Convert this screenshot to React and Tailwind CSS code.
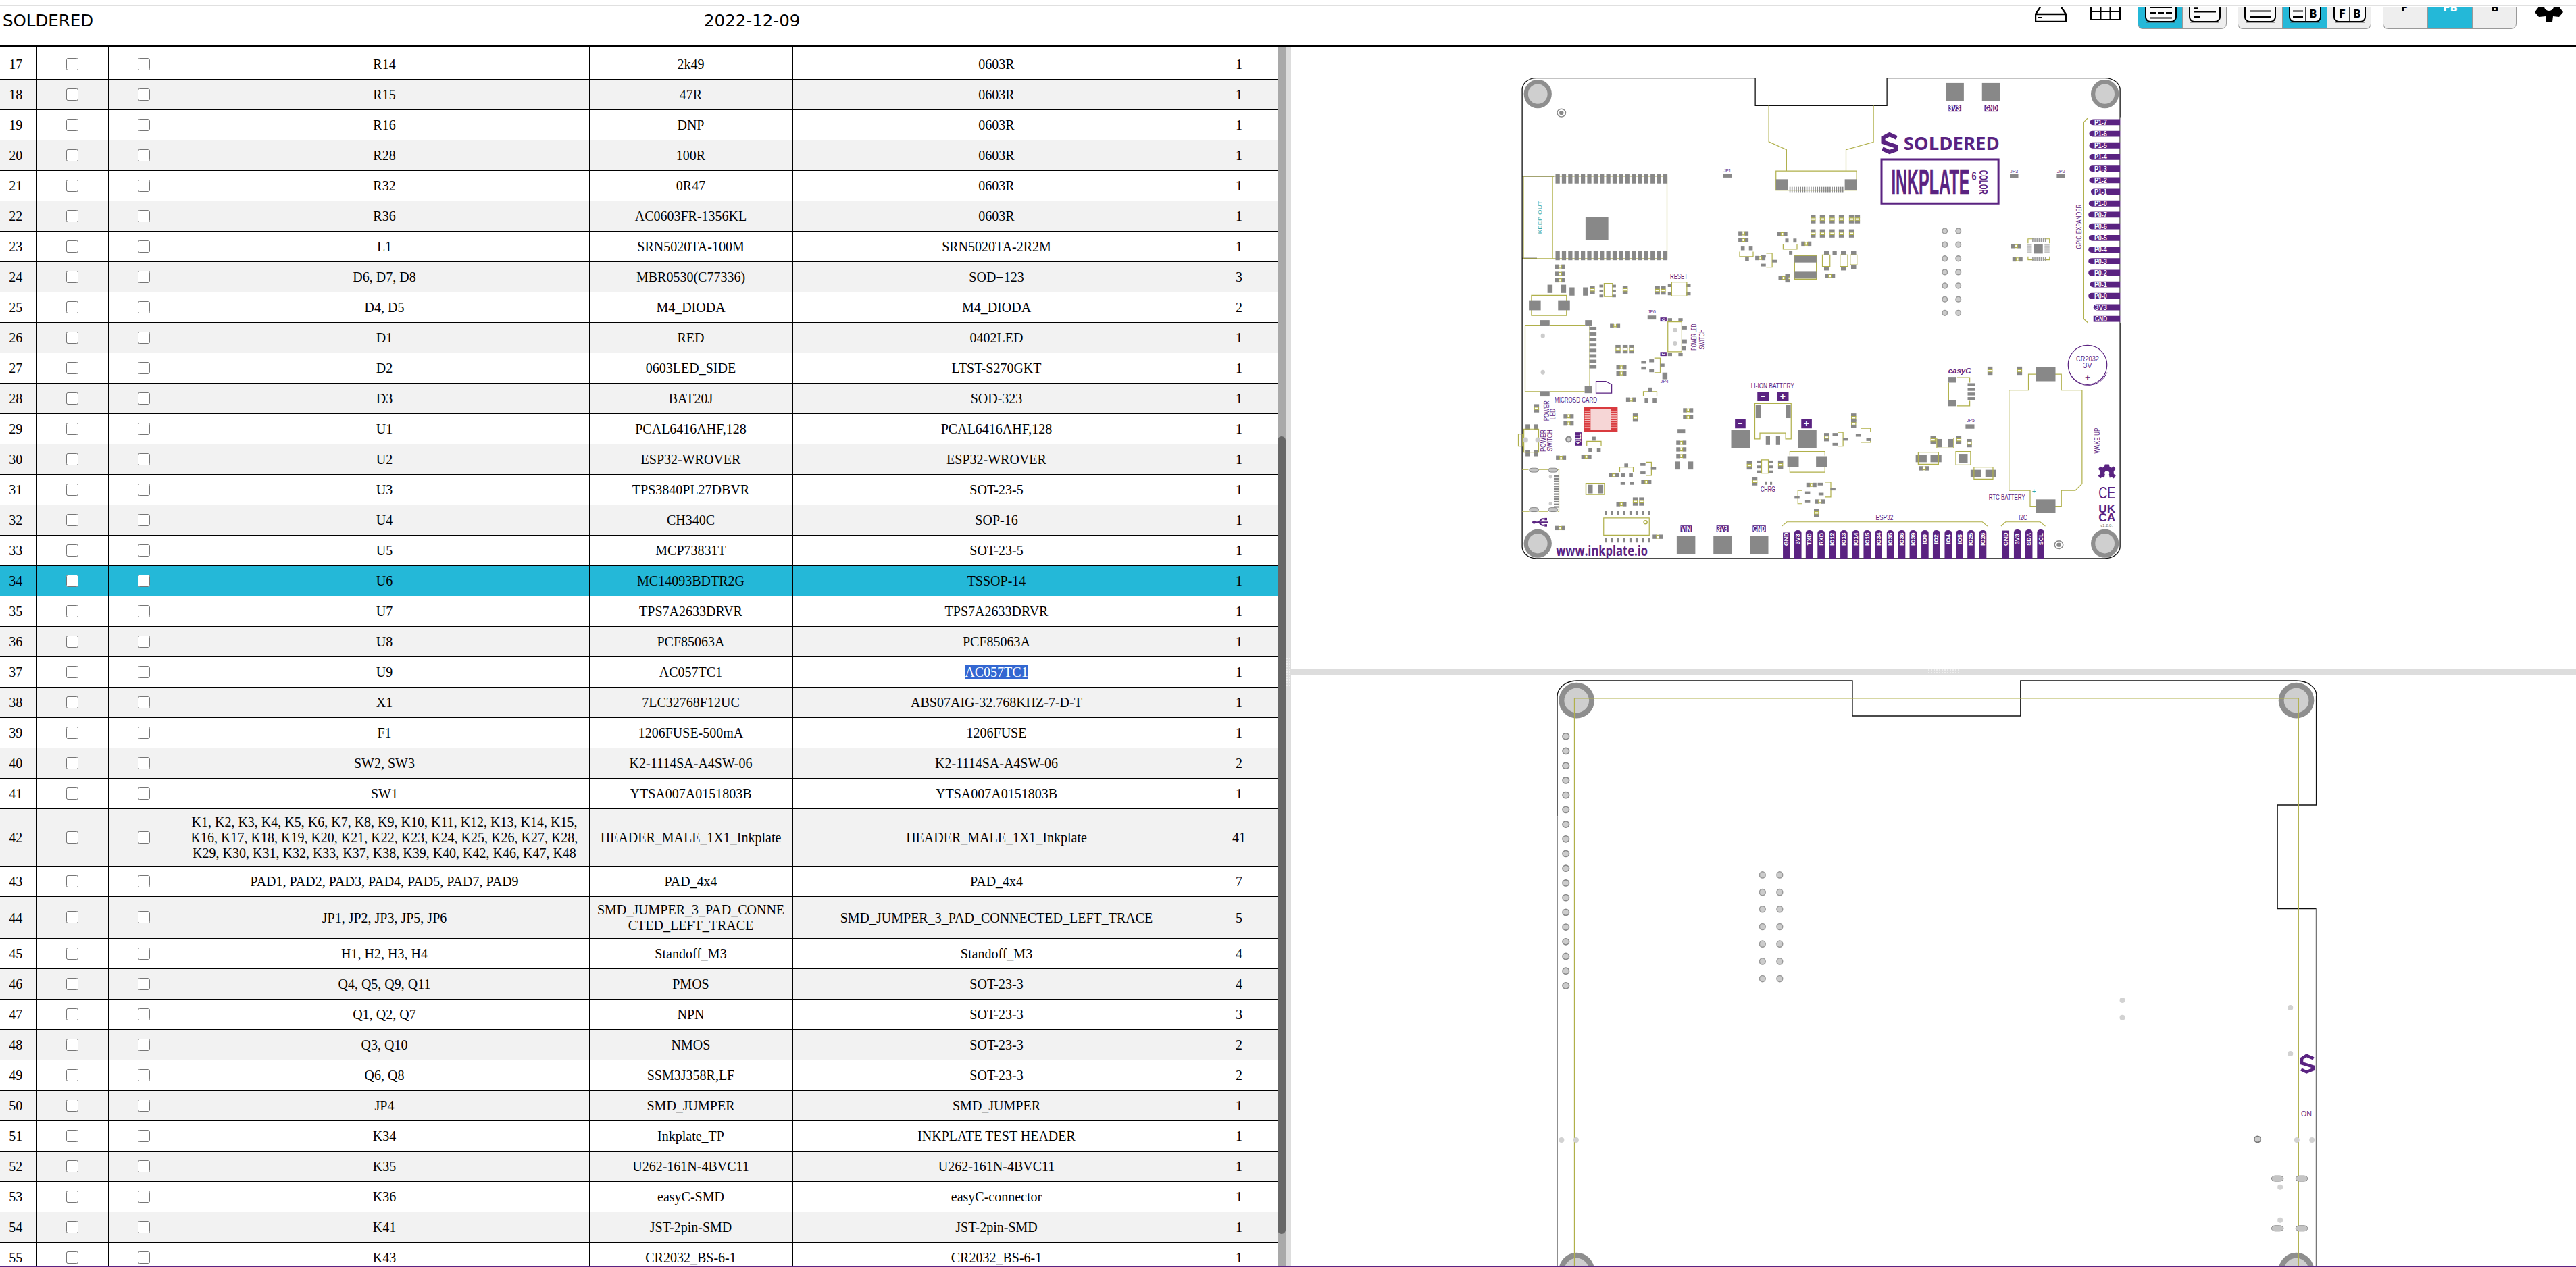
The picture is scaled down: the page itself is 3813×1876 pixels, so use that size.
import React from 'react';

const P = '#5a2381', PAD = '#888888', SILK = '#b0b04a', SANS = '"Liberation Sans", Arial, sans-serif';
const SX = 0.625, SY = 0.4912;

const rows = [
  [17,'R14','2k49','0603R',1],[18,'R15','47R','0603R',1],[19,'R16','DNP','0603R',1],[20,'R28','100R','0603R',1],[21,'R32','0R47','0603R',1],
  [22,'R36','AC0603FR-1356KL','0603R',1],[23,'L1','SRN5020TA-100M','SRN5020TA-2R2M',1],[24,'D6, D7, D8','MBR0530(C77336)','SOD−123',3],[25,'D4, D5','M4_DIODA','M4_DIODA',2],
  [26,'D1','RED','0402LED',1],[27,'D2','0603LED_SIDE','LTST-S270GKT',1],[28,'D3','BAT20J','SOD-323',1],[29,'U1','PCAL6416AHF,128','PCAL6416AHF,128',1],[30,'U2','ESP32-WROVER','ESP32-WROVER',1],
  [31,'U3','TPS3840PL27DBVR','SOT-23-5',1],[32,'U4','CH340C','SOP-16',1],[33,'U5','MCP73831T','SOT-23-5',1],[34,'U6','MC14093BDTR2G','TSSOP-14',1],[35,'U7','TPS7A2633DRVR','TPS7A2633DRVR',1],
  [36,'U8','PCF85063A','PCF85063A',1],[37,'U9','AC057TC1','AC057TC1',1],[38,'X1','7LC32768F12UC','ABS07AIG-32.768KHZ-7-D-T',1],[39,'F1','1206FUSE-500mA','1206FUSE',1],
  [40,'SW2, SW3','K2-1114SA-A4SW-06','K2-1114SA-A4SW-06',2],[41,'SW1','YTSA007A0151803B','YTSA007A0151803B',1],
  [42,'K1, K2, K3, K4, K5, K6, K7, K8, K9, K10, K11, K12, K13, K14, K15, K16, K17, K18, K19, K20, K21, K22, K23, K24, K25, K26, K27, K28, K29, K30, K31, K32, K33, K37, K38, K39, K40, K42, K46, K47, K48','HEADER_MALE_1X1_Inkplate','HEADER_MALE_1X1_Inkplate',41],
  [43,'PAD1, PAD2, PAD3, PAD4, PAD5, PAD7, PAD9','PAD_4x4','PAD_4x4',7],[44,'JP1, JP2, JP3, JP5, JP6','SMD_JUMPER_3_PAD_CONNECTED_LEFT_TRACE','SMD_JUMPER_3_PAD_CONNECTED_LEFT_TRACE',5],
  [45,'H1, H2, H3, H4','Standoff_M3','Standoff_M3',4],[46,'Q4, Q5, Q9, Q11','PMOS','SOT-23-3',4],[47,'Q1, Q2, Q7','NPN','SOT-23-3',3],[48,'Q3, Q10','NMOS','SOT-23-3',2],[49,'Q6, Q8','SSM3J358R,LF','SOT-23-3',2],
  [50,'JP4','SMD_JUMPER','SMD_JUMPER',1],[51,'K34','Inkplate_TP','INKPLATE TEST HEADER',1],[52,'K35','U262-161N-4BVC11','U262-161N-4BVC11',1],[53,'K36','easyC-SMD','easyC-connector',1],[54,'K41','JST-2pin-SMD','JST-2pin-SMD',1],[55,'K43','CR2032_BS-6-1','CR2032_BS-6-1',1],
];

/* ---------- toolbar drawings ---------- */
const Frame = ({ x = 11, w = 45, children }) => (
  <svg width="66" height="33" viewBox="0 0 66 33" className="block">
    <rect x={x} y="-20" width={w} height="42" rx="7" fill="#fafafa" stroke="#000" strokeWidth="2" />
    <path d={`M${x + 1} 23 h${w - 2}`} stroke="#555" strokeWidth="1" />
    {children}
  </svg>
);
const Ln = ({ d, w = 2 }) => <path d={d} stroke="#000" strokeWidth={w} fill="none" />;
const Bt = ({ x, t, c = '#000', s = 15 }) => (
  <text x={x} y={16} textAnchor="middle" fontSize={s} fontWeight="700" fill={c} fontFamily='"DejaVu Sans", sans-serif'>{t}</text>
);
const Btn = ({ on, first, last, children }) => (
  <div className={`w-[66px] h-[33px] overflow-hidden border-b border-l border-[#999] ${on ? 'bg-[#24b8d8]' : 'bg-[#eeeeee]'} ${first ? 'rounded-bl-[8px]' : ''} ${last ? 'border-r rounded-br-[8px]' : ''}`}>
    {children}
  </div>
);

/* ---------- board drawing helpers ---------- */
const R = ({ x, y, w, h, f = PAD, rx }) => <rect x={x} y={y} width={w} height={h} fill={f} rx={rx} />;
const S = ({ d, c = SILK, w = 1.2 }) => <path d={d} fill="none" stroke={c} strokeWidth={w} vectorEffect="non-scaling-stroke" />;
const Box = ({ x, y, w, h, c = SILK, sw = 1.2 }) => <rect x={x} y={y} width={w} height={h} fill="none" stroke={c} strokeWidth={sw} vectorEffect="non-scaling-stroke" />;
const Cv = ({ x, y, h = 25 }) => (<g><R x={x} y={y} w={12} h={h * 0.36} /><R x={x} y={y + h * 0.64} w={12} h={h * 0.36} /><Box x={x + 1} y={y + h * 0.36} w={10} h={h * 0.28} /></g>);
const Ch = ({ x, y }) => (<g><R x={x} y={y} w={9} h={13} /><R x={x + 15} y={y} w={9} h={13} /><Box x={x + 9} y={y + 2} w={6} h={9} /></g>);
const Hole = ({ x, y, rx = 6, ry = 8, ring = '#999', f = '#cccccc', sw = 1.5 }) => <ellipse cx={x} cy={y} rx={rx} ry={ry} fill={f} stroke={ring} strokeWidth={sw} vectorEffect="non-scaling-stroke" />;
const Mount = ({ x, y, rx = 33, ry = 43, irx = 23, iry = 30 }) => (<g><ellipse cx={x} cy={y} rx={rx} ry={ry} fill="#8e8e8e" /><ellipse cx={x} cy={y} rx={irx} ry={iry} fill="#cfcfcf" /></g>);
const T = ({ x, y, t, s = 8, c = P, r = 0, b, len, a = 'middle', f = SANS, i, st }) => {
  const px = x * SX, py = y * SY;
  return (
    <text x={px} y={py} transform={r ? `rotate(${r} ${px} ${py})` : undefined} fontSize={s} fill={c} stroke={st ? c : undefined} strokeWidth={st} fontWeight={b ? 700 : 400} fontStyle={i ? 'italic' : 'normal'} fontFamily={f} textAnchor={a} dominantBaseline="central" textLength={len} lengthAdjust={len ? 'spacingAndGlyphs' : undefined}>{t}</text>
  );
};

const gpio = [['P1-7',185,1430],['P1-6',220,1428],['P1-5',255,1428],['P1-4',290,1428],['P1-3',325,1428],['P1-2',360,1428],['P1-1',395,1432],['P1-0',430,1427],['P0-7',464,1426],['P0-6',499,1427],['P0-5',534,1427],['P0-4',569,1426],['P0-3',604,1426],['P0-2',639,1426],['P0-1',674,1430],['P0-0',709,1426],['3V3',743,1438],['GND',778,1438]];
const esp = ['GND','3V3','TXD','RXD','IO12','IO13','IO14','IO15','IO34','IO35','IO36','IO39','IO0','IO2','IO4','IO5','IO25','IO26'];
const espX = [711,738,765,793,820,847,875,902,929,957,984,1011,1039,1066,1094,1121,1148,1176];
const i2c = [['GND',1230],['3V3',1258],['SDA',1285],['SCL',1313]];
const cvs = [[768,465],[790,465],[813,465],[835,465],[859,465],[873,465],[768,508],[790,508],[813,508],[835,508],[859,508],[245,678],[323,678],[399,680],[413,680],[113,1035],[617,1207],[691,1205],[630,1255],[776,1350],[1187,922],[1257,922],[1052,1130],[1113,1130],[1138,1140],[800,1122],[864,1063],[864,1082],[347,1063],[347,1316],[362,1316],[708,643],[306,857],[323,857],[338,857]];
const chs = [[163,614],[163,636],[163,655],[597,514],[597,534],[689,516],[746,545],[293,791],[308,918],[308,936],[331,1015],[466,1047],[466,1068],[183,1065],[183,1087],[225,1187],[165,1190],[290,1243],[367,1263],[308,1330],[394,1428],[163,1402],[450,1145],[450,1165],[450,1185],[758,1272],[778,1322],[1025,1222],[1243,552],[1246,592],[637,588],[692,648],[802,642]];
const pads = [
  [603,558,9,13],[622,558,9,13],[613,590,9,13],[650,585,12,8],[650,612,12,8],[677,600,11,8],[708,536,8,12],[727,536,8,12],[717,572,8,12],
  [800,574,12,12],[820,574,10,12],[800,620,12,12],[840,574,12,12],[840,620,12,12],[864,573,12,12],[864,616,12,12],
  [145,675,12,25],[177,675,12,25],[197,683,12,25],[229,683,12,25],[268,675,9,8],[268,690,9,8],[268,705,9,8],[298,675,9,8],[298,690,9,8],[298,705,9,8],
  [101,722,28,30],[170,722,28,30],[430,672,10,10],[430,697,10,10],[474,672,10,10],[474,697,10,10],
  [430,776,10,10],[455,776,10,10],[430,880,10,10],[455,880,10,10],[463,798,12,12],[463,840,12,12],[463,860,10,12],
  [367,904,11,9],[367,922,11,9],[386,900,11,9],[386,930,11,9],[412,913,10,9],[417,940,12,20],
  [383,985,10,14],[375,1018,9,14],[394,1018,9,14],[93,1096,10,16],[112,1096,10,16],[93,1174,10,18],[112,1174,10,18],
  [250,1133,9,12],[242,1167,9,12],[262,1167,9,12],[327,1214,9,12],[320,1244,9,12],[338,1244,9,12],[318,1270,10,8],[340,1270,10,8],[365,1213,12,8],[365,1238,12,8],[390,1225,12,8],
  [240,1278,12,26],[265,1278,12,26],[447,1208,12,24],[478,1208,12,24],[453,1110,18,12],
  [640,1205,11,8],[640,1220,11,8],[640,1235,11,8],[668,1205,11,8],[668,1220,11,8],[668,1235,11,8],[713,1192,27,32],[781,1192,27,32],[660,1268,5,10],[672,1268,5,10],
  [785,1272,12,8],[787,1302,12,8],[815,1287,12,8],[730,1312,12,8],[755,1298,12,8],[755,1325,12,8],[820,1122,12,8],[820,1152,12,8],[845,1137,12,8],[875,1125,12,8],[900,1138,12,8],
  [662,1130,10,28],[686,1130,10,28],[638,1037,12,40],[709,1037,12,40],
  [1094,953,18,17],[1094,1024,18,17],[1140,972,17,9],[1140,986,17,9],[1140,1000,17,9],[1140,1014,17,9],
  [1067,1140,12,25],[1094,1140,12,25],[1017,1188,26,22],[1052,1188,26,22],[1147,1233,25,22],[1182,1233,25,22],[1120,1185,20,28],
  [1296,553,22,28],[1302,924,46,42],[1302,1322,46,42],
  [127,782,23,16],[234,782,17,16],[127,996,23,16],[233,980,18,22],
];
const silk = [
  'M600 575V590H632V575','M663 580H677V622H663','M703 552V568H736V552','M107 730V707H190V730','M107 750V768H190V750','M398 896H412V940H398','M372 1012V997H404V1012',
  'M238 1162V1147H272V1162','M316 1240V1225H348V1240','M378 1210H391V1250H378','M719 1190V1178H802V1190','M719 1225V1240H802V1225','M802 1270H816V1315H802','M748 1295H738V1335H748',
  'M832 1120H845V1162H832','M888 1108H910V1118','M888 1150H910V1142','M1115 955H1145V970','M1095 970V1025','M1115 1040H1145V1025',
  'M1284 993H1238V1295H1288V1343H1362V1295H1395L1411 1275V993H1362V945H1284Z',
  'M1425 172L1415 185V778L1425 790','M700 1403L712 1390H1175L1187 1403','M1219 1403L1230 1390H1312L1324 1403',
  'M669 135V244L711 268V332','M917 135V245L852 268V332','M92 797H127M150 797H234M245 797V980M92 797V997H127M150 997H233',
  'M636 1140V1033H722V1140H709V1122H648V1140Z','M1283 550V537H1296M1322 537H1334V550M1283 590V600H1296M1322 600H1334V590',
  'M85 1232H100M124 1232H147M169 1232H172V1358H169M147 1358H124M102 1358H85',
];

const FrontBoard = () => (
  <svg width="980" height="770" viewBox="0 0 980 770" className="block shrink-0">
    <g transform={`scale(${SX} ${SY})`}>
      {[[122,100],[1465,100],[122,1455],[1465,1455]].map(([x, y], i) => <Mount key={i} x={x} y={y} />)}
      <S d="M118 52H637V135H949V52H1465A36 36 0 0 1 1501 90V1462A36 36 0 0 1 1465 1500H118A33 36 0 0 1 85 1462V90A33 36 0 0 1 118 52Z" c="#111" w="1.3" />
      <S d="M85 348H160M85 595H120" c="#111" w="1" />
      <Hole x={178} y={157} rx={10} ry={12} f="#fff" ring="#888" /><Hole x={178} y={157} rx={4} ry={5} f="#888" ring="#888" />
      <Hole x={1356} y={1459} rx={10} ry={12} f="#fff" ring="#888" /><Hole x={1356} y={1459} rx={4} ry={5} f="#888" ring="#888" />
      {silk.map((d, i) => <S key={i} d={d} />)}
      <Box x={88} y={348} w={340} h={248} /><S d="M157 348V596" />
      {Array.from({ length: 18 }, (_, i) => <g key={i}><R x={164 + i * 15} y={342} w={10} h={28} /><R x={164 + i * 15} y={574} w={10} h={27} /></g>)}
      <R x={235} y={472} w={54} h={68} />
      <Box x={686} y={332} w={191} h={58} /><R x={686} y={357} w={28} h={32} /><R x={849} y={357} w={28} h={32} />
      {Array.from({ length: 26 }, (_, i) => <R key={i} x={718 + i * 5} y={380} w={2.6} h={18} />)}
      <R x={1088} y={67} w={43} h={55} /><R x={1174} y={67} w={43} h={55} />
      <R x={561} y={340} w={20} h={12} /><R x={1240} y={342} w={20} h={12} /><R x={1351} y={342} w={20} h={12} /><R x={382} y={768} w={20} h={12} /><R x={1135} y={1096} w={21} h={13} />
      {pads.map(([x, y, w, h], i) => <R key={i} x={x} y={y} w={w} h={h} />)}
      {cvs.map(([x, y], i) => <Cv key={i} x={x} y={y} />)}
      {chs.map(([x, y], i) => <Ch key={i} x={x} y={y} />)}
      <rect x={730} y={588} width={52} height={70} fill="#fff" stroke={SILK} strokeWidth="1.5" vectorEffect="non-scaling-stroke" /><R x={730} y={588} w={52} h={20} /><R x={730} y={636} w={52} h={20} />
      <Box x={796} y={585} w={18} h={35} /><Box x={838} y={585} w={18} h={35} /><Box x={862} y={585} w={16} h={30} />
      <Box x={439} y={667} w={36} h={42} /><Box x={279} y={671} w={20} h={40} /><Box x={430} y={787} w={33} h={90} />
      <Hole x={447} y={812} rx={5} ry={7} ring="none" /><Hole x={447} y={852} rx={5} ry={7} ring="none" />
      <Hole x={134} y={829} rx={5} ry={7} ring="none" /><Hole x={134} y={939} rx={5} ry={7} ring="none" />
      {Array.from({ length: 8 }, (_, i) => <R key={i} x={244} y={802 + i * 16.5} w={17} h={10} />)}
      <Box x={89} y={1110} w={35} h={70} /><Box x={76} y={1125} w={10} h={37} />
      <Hole x={93} y={1143} rx={6} ry={8} ring="none" /><Hole x={122} y={1143} rx={6} ry={8} ring="none" />
      <Hole x={195} y={1141} rx={6} ry={8} ring="#888" sw={2} />
      <Box x={236} y={1274} w={44} h={33} sw={1.5} />
      <Box x={652} y={1203} w={16} h={40} />
      <Box x={1067} y={1137} w={40} h={30} /><Box x={1023} y={1180} w={48} h={36} /><Box x={1155} y={1225} w={45} h={36} /><Box x={1112} y={1178} w={35} h={40} />
      {/* red chip */}
      <R x={231} y={1044} w={80} h={75} f="#d93b3f" /><R x={247} y={1050} w={48} h={63} f="#f6d6d6" />
      {Array.from({ length: 8 }, (_, i) => <g key={i}><R x={233} y={1055 + i * 7} w={14} h={3} f="#f3b9b9" /><R x={295} y={1055 + i * 7} w={14} h={3} f="#f3b9b9" /></g>)}
      {/* usb */}
      {[[102,1228],[147,1228],[102,1347],[147,1347]].map(([x, y], i) => <rect key={i} x={x} y={y} width={22} height={12} rx={6} fill="#c4c4c4" stroke="#888" strokeWidth="1" vectorEffect="non-scaling-stroke" />)}
      {Array.from({ length: 13 }, (_, i) => <R key={i} x={160} y={1250 + i * 7.7} w={12} h={4.5} />)}
      <Hole x={152} y={1254} rx={4} ry={5} ring="none" /><Hole x={152} y={1335} rx={4} ry={5} ring="none" />
      {/* soic */}
      <Box x={278} y={1378} w={108} h={52} /><Hole x={377} y={1391} rx={4} ry={5} f="#fff" ring={SILK} />
      {Array.from({ length: 8 }, (_, i) => <g key={i}><R x={281 + i * 14.5} y={1356} w={5} h={14} /><R x={281 + i * 14.5} y={1438} w={5} h={14} /></g>)}
      {/* big pads */}
      {[[451,1432],[538,1432],[624,1432],[580,1113],[738,1113]].map(([x, y], i) => <R key={i} x={x} y={y} w={44} h={55} />)}
      {/* sd icon */}
      <S d="M260 1002V966H283L297 976V1002Z" c={P} />
      {/* gpio holes */}
      {[513,554,596,637,678,719,760].map((y) => <g key={y}><Hole x={1086} y={y} /><Hole x={1118} y={y} /></g>)}
      {/* qfn */}
      {Array.from({ length: 7 }, (_, i) => <g key={i}><R x={1293 + i * 5} y={534} w={2.5} h={12} f="#999" /><R x={1293 + i * 5} y={591} w={2.5} h={12} f="#999" /><R x={1280} y={553 + i * 4} w={12} h={2} f="#999" /><R x={1322} y={553 + i * 4} w={12} h={2} f="#999" /></g>)}
      {/* purple plates */}
      {gpio.map(([, y, x], i) => <rect key={i} x={x} y={y - 9} width={1501 - x + 8} height={18} rx={i === 17 ? 0 : 8} fill={P} />)}
      <R x={1501.5} y={170} w={10} h={620} f="#fff" />
      {espX.map((x, i) => <rect key={i} x={x - 8.5} y={i === 0 ? 1422 : 1415} width={17} height={i === 0 ? 78 : 93} rx={i === 0 ? 0 : 8} fill={P} />)}
      {i2c.map(([, x], i) => <rect key={i} x={x - 8.5} y={i === 0 ? 1416 : 1413} width={17} height={i === 0 ? 84 : 95} rx={i === 0 ? 0 : 8} fill={P} />)}
      <R x={690} y={1500.5} w={650} h={20} f="#fff" />
      {[[1095,133,30,20],[1180,133,32,20],[460,1401,27,20],[545,1401,29,20],[631,1401,31,20],[412,774,15,12],[412,878,15,12],[211,1120,16,40],[642,998,27,28],[689,998,27,28],[589,1080,25,28],[746,1080,25,28]].map(([x, y, w, h], i) => <R key={i} x={x} y={y} w={w} h={h} f={P} />)}
      <Box x={936} y={297} w={277} h={133} c={P} sw={3} />
      <S d="M972 232L955 222L940 232V245L970 258V268L955 275L938 265" c={P} w={6} />
      <ellipse cx={1424} cy={917} rx={46} ry={59} fill="none" stroke={P} strokeWidth="1.2" vectorEffect="non-scaling-stroke" />
      <S d="M1385 950A48 61 0 0 0 1470 940" c={P} w={1} />
      {/* usb glyph */}
      <S d="M110 1391H146M124 1391L132 1381H138M124 1391L132 1400H138" c={P} w={2} />
      <ellipse cx={113} cy={1391} rx={4} ry={5} fill={P} /><R x={138} y={1378} w={6} h={7} f={P} /><R x={138} y={1397} w={6} h={7} f={P} />
      {/* gear */}
      <g transform="translate(1470 1241) scale(1.6 2.036)">
        <path d="M-3 -12H3L4 -8L7 -7L10 -9L13 -5L10 -2V2L13 5L10 9L7 7L4 8L3 3A3.5 3.5 0 1 0 -3 3L-4 8L-7 7L-10 9L-13 5L-10 2V-2L-13 -5L-10 -9L-7 -7L-4 -8Z" fill={P} />
      </g>
    </g>

    {/* text, in real pixels */}
    <T x={127} y={472} t="KEEP OUT" s={8} c="#35a9a9" r={-90} len={49} />
    <T x={1109} y={143} t="3V3" s={10.5} c="#fff" b len={17} /><T x={1196} y={143} t="GND" s={10.5} c="#fff" b len={18} />
    <T x={473} y={1411} t="VIN" s={10.5} c="#fff" b len={15} /><T x={559} y={1411} t="3V3" s={10.5} c="#fff" b len={16} /><T x={646} y={1411} t="GND" s={10.5} c="#fff" b len={18} />
    <T x={1102} y={248} t="SOLDERED" s={27} b len={142} f='"Open Sans", sans-serif' />
    <T x={1052} y={365} t="INKPLATE" s={51} b len={116} st={0.5} />
    <T x={1155} y={347} t="6" s={19} b len={7} />
    <T x={1177} y={366} t="COLOR" s={16} b r={90} len={36} />
    <T x={571} y={330} t="JP1" s={7.5} len={11} /><T x={1250} y={332} t="JP3" s={7.5} len={12} /><T x={1361} y={332} t="JP2" s={7.5} len={12} />
    <T x={392} y={757} t="JP6" s={7.5} len={12} /><T x={422} y={965} t="JP4" s={7.5} len={12} /><T x={1147} y={1085} t="JP5" s={7.5} len={12} />
    {gpio.map(([t, y], i) => <T key={i} x={t.length > 3 ? 1455 : 1456} y={y} t={t} s={10.5} c="#fff" b len={t.length > 3 ? 19 : 18} />)}
    <T x={1404} y={500} t="GPIO EXPANDER" s={10} r={-90} len={66} />
    <T x={456} y={650} t="RESET" s={11} len={26} />
    <T x={492} y={833} t="POWER LED" s={10} r={-90} len={39} /><T x={512} y={840} t="SWITCH" s={10} r={-90} len={30} />
    <T x={420} y={780} t="0" s={7} c="#fff" b r={90} /><T x={420} y={884} t="1" s={7} c="#fff" b r={90} />
    <T x={212} y={1023} t="MICROSD CARD" s={11} len={63} />
    <T x={143} y={1055} t="POWER" s={10} r={-90} len={30} /><T x={158} y={1065} t="LED" s={10} r={-90} len={16} />
    <T x={135} y={1145} t="POWER" s={10} r={-90} len={33} /><T x={151} y={1145} t="SWITCH" s={10} r={-90} len={32} />
    <T x={219} y={1140} t="KILL" s={10} c="#fff" b r={-90} len={17} />
    <T x={678} y={980} t="LI-ION BATTERY" s={11} len={64} />
    <T x={655} y={1012} t="−" s={12} c="#fff" b /><T x={702} y={1012} t="+" s={14} c="#fff" b />
    <T x={601} y={1094} t="−" s={12} c="#fff" b /><T x={758} y={1094} t="+" s={14} c="#fff" b />
    <T x={667} y={1290} t="CHRG" s={11} len={22} />
    <T x={1121} y={935} t="easyC" s={11} b i len={34} />
    <T x={1233} y={1316} t="RTC BATTERY" s={11} len={54} />
    <T x={1297} y={1298} t="+" s={10} c="#35a9a9" />
    <T x={1424} y={897} t="CR2032" s={10.5} len={34} /><T x={1424} y={918} t="3V" s={10.5} /><T x={1424} y={954} t="+" s={14} b />
    <T x={1448} y={1145} t="WAKE UP" s={10} r={-90} len={38} />
    <T x={1470} y={1302} t="CE" s={24} len={25} />
    <T x={1470} y={1351} t="UK" s={16} b len={25} /><T x={1470} y={1377} t="CA" s={16} b len={25} />
    <T x={1469} y={1400} t="v1.2.0." s={6} c="#777" />
    <T x={943} y={1377} t="ESP32" s={11} len={26} /><T x={1271} y={1377} t="I2C" s={11} len={13} />
    <T x={165} y={1475} t="www.inkplate.io" s={21} a="start" b len={136} f='"Open Sans", sans-serif' />
    {esp.map((t, i) => <T key={i} x={espX[i]} y={1442} t={t} s={9} c="#fff" b r={-90} />)}
    {i2c.map(([t, x], i) => <T key={i} x={x} y={1442} t={t} s={9} c="#fff" b r={-90} />)}
  </svg>
);

const BackBoard = () => (
  <svg width="1250" height="876" viewBox="0 19 1250 876" className="block shrink-0">
    <g transform="scale(0.7974 0.5714)">
      {[[105,100],[1441,100],[105,1577],[1441,1577]].map(([x, y], i) => <Mount key={i} x={x} y={y} rx={33} ry={46} irx={23} iry={32} />)}
      <S d="M105 49H617V140H929V49H1441A37 37 0 0 1 1478 90V371H1406V640H1478M69 400V90A36 41 0 0 1 105 49" c="#111" w="1.3" />
      <S d="M1478 640V1600M69 400V1600" c="#777" w="1.6" />
      <S d="M101 1600V94H1445V1600" w="1.4" />
      {Array.from({ length: 18 }, (_, i) => <Hole key={i} x={85} y={193 + i * 38} rx={6} ry={8} ring="#888" sw={1.6} />)}
      {[552,597,641,686,731,776,821].map((y) => <g key={y}><Hole x={450} y={y} rx={5.5} ry={8} /><Hole x={482} y={y} rx={5.5} ry={8} /></g>)}
      {[[1118,877],[1118,922],[1430,896],[1430,1015],[77,1239],[104,1239],[1442,1239],[1470,1239],[1411,1361],[1411,1447]].map(([x, y], i) => <ellipse key={i} cx={x} cy={y} rx={5} ry={7} fill="#d2d2d2" />)}
      <Hole x={1369} y={1237} rx={6} ry={8} ring="#777" sw={1.6} />
      {[[1406,1339],[1451,1339],[1406,1468],[1451,1468]].map(([x, y], i) => <rect key={i} x={x - 11} y={y - 7} width={22} height={14} rx={7} fill="#c4c4c4" stroke="#888" strokeWidth="1" vectorEffect="non-scaling-stroke" />)}
      <S d="M1473 1028L1460 1020L1451 1028V1040L1472 1049V1056L1460 1063L1450 1056" c={P} w={4.5} />
    </g>
    <text x={1164} y={669} fontSize={10.5} fill={P} fontFamily={SANS} textAnchor="middle" textLength={16} lengthAdjust="spacingAndGlyphs" dominantBaseline="central">ON</text>
  </svg>
);

const BT = ({ x, t, c = '#000' }) => <text x={x} y="7" fontSize="15" fontWeight="700" fill={c} textAnchor="middle" fontFamily='"DejaVu Sans", sans-serif'>{t}</text>;

export default function App() {
  return (
    <div className="w-[3813px] h-[1876px] overflow-hidden flex flex-col bg-white border-b border-[#5a2381]">
      {/* top bar */}
      <div className="h-[70px] shrink-0 pt-[8px] border-b-[3px] border-black">
        <div className="h-px bg-[#e0e0e0]" />
        <div className="mt-px h-[50px] flex items-start overflow-hidden text-[24.5px] leading-[28px] text-black font-['DejaVu_Sans',sans-serif]">
          <div className="w-[1042px] pl-[4px] pt-[7px]">SOLDERED</div>
          <div className="pt-[7px]">2022-12-09</div>
          <div className="ml-auto pr-[19px] flex items-start">
            <svg width="47" height="23" viewBox="0 0 47 23" className="block mr-[35px]">
              <Ln d="M9 -1L1 11V22H46V11L38 -1M1 11H46" w={2.4} /><Ln d="M5 16H11" />
            </svg>
            <svg width="45" height="20" viewBox="0 0 45 20" className="block mr-[25px]">
              <Ln d="M1 0V19H44V0M15.5 0V19M29.5 0V19M1 7H44" />
            </svg>
            <div className="flex mr-[16px]">
              <Btn on first><Frame><Ln d="M17 1H50" /><Ln d="M17 9H26M29 9H38M41 9H50" /><Ln d="M17 16.5H50" /></Frame></Btn>
              <Btn last><Frame x={10}><Ln d="M16 2.5H23" w={2.4} /><Ln d="M16 7.5H49" /><Ln d="M16 15H25" w={2.4} /></Frame></Btn>
            </div>
            <div className="flex mr-[17px]">
              <Btn first><Frame x={10}><Ln d="M17 0H48M17 6.5H48M17 15H48" /></Frame></Btn>
              <Btn on><Frame x={10} w={46}><Ln d="M34 -5V22" w={1.5} /><Ln d="M15 0H30M15 6.5H30M15 15H30" /><Bt x={45} t="B" /></Frame></Btn>
              <Btn last><Frame x={10} w={46}><Ln d="M33 -5V22" w={1.5} /><Bt x={22} t="F" /><Bt x={44} t="B" /></Frame></Btn>
            </div>
            <div className="flex mr-[27px]">
              <Btn first><svg width="66" height="33" className="block"><BT x={31} t="F" /></svg></Btn>
              <Btn on><svg width="66" height="33" className="block"><BT x={33} t="FB" c="#fff" /></svg></Btn>
              <Btn last><svg width="66" height="33" className="block"><BT x={33} t="B" /></svg></Btn>
            </div>
            <svg width="42" height="23" viewBox="0 0 42 23" className="block">
              <path d="M6 0L0 8L6 15L16 14L17 22H26L27 14L36 15L42 8L36 0H28A7 6 0 0 1 14 0Z" fill="#000" />
            </svg>
          </div>
        </div>
      </div>

      {/* split */}
      <div className="flex-1 min-h-0 flex">
        {/* BOM */}
        <div className="w-[1891px] shrink-0 overflow-hidden">
          <table className="w-[1891px] table-fixed border-collapse text-[20px] leading-[23px] text-black text-center font-['Liberation_Serif',serif]">
            <colgroup>
              <col className="w-[54px]" /><col className="w-[106px]" /><col className="w-[106px]" /><col className="w-[606px]" /><col className="w-[301px]" /><col className="w-[604px]" /><col className="w-[114px]" />
            </colgroup>
            <tbody>
              <tr className="h-[2px]">{[0, 1, 2, 3, 4, 5, 6].map((i) => <td key={i} className="p-0 border-x border-black first:border-l-0 text-[0px] leading-[0]" />)}</tr>
              {rows.map((r) => {
                const bg = r[0] === 34 ? 'bg-[#24b8d8]' : r[0] % 2 === 0 ? 'bg-[#f2f2f2]' : 'bg-white';
                const td = 'border border-black pt-[8.5px] pb-[6.5px] px-[7px]';
                const box = 'border border-black p-0';
                return (
                  <tr key={r[0]} className={`h-[45px] ${bg}`}>
                    <td className="border border-black border-l-0 pt-[8.5px] pb-[6.5px] pr-[7px] pl-0">{r[0]}</td>
                    <td className={box}><input type="checkbox" readOnly className="block mx-auto w-[18px] h-[18px]" /></td>
                    <td className={box}><input type="checkbox" readOnly className="block mx-auto w-[18px] h-[18px]" /></td>
                    <td className={td}>{r[1]}</td>
                    <td className={`${td} break-all`}>{r[2]}</td>
                    <td className={td}>{r[0] === 37 ? <span className="bg-[#3367d1] text-white">{r[3]}</span> : r[3]}</td>
                    <td className={td}>{r[4]}</td>
                  </tr>
                );
              })}
            </tbody>
          </table>
        </div>

        {/* scrollbar */}
        <div className="w-[12px] shrink-0 bg-[#a9a9a9]">
          <div className="h-[576px]" />
          <div className="h-[1181px] bg-[#666666] rounded-[6px]" />
        </div>

        {/* vertical gutter */}
        <div className="w-[8px] shrink-0 bg-[#dddddd]">
          <div className="h-[903px]" />
          <div className="h-[44px] bg-[radial-gradient(#eeeeee_1px,transparent_1px)] bg-[length:4px_4px]" />
        </div>

        {/* boards */}
        <div className="flex-1 min-w-0 flex flex-col">
          <div className="h-[920px] shrink-0 overflow-hidden pl-[289px] pt-[20px]"><FrontBoard /></div>
          <div className="h-[9px] shrink-0 bg-[#dddddd] flex justify-center">
            <div className="w-[46px] ml-[28px] bg-[radial-gradient(#eeeeee_1px,transparent_1px)] bg-[length:4px_4px]" />
          </div>
          <div className="flex-1 min-h-0 overflow-hidden pl-[339px]"><BackBoard /></div>
        </div>
      </div>
    </div>
  );
}
